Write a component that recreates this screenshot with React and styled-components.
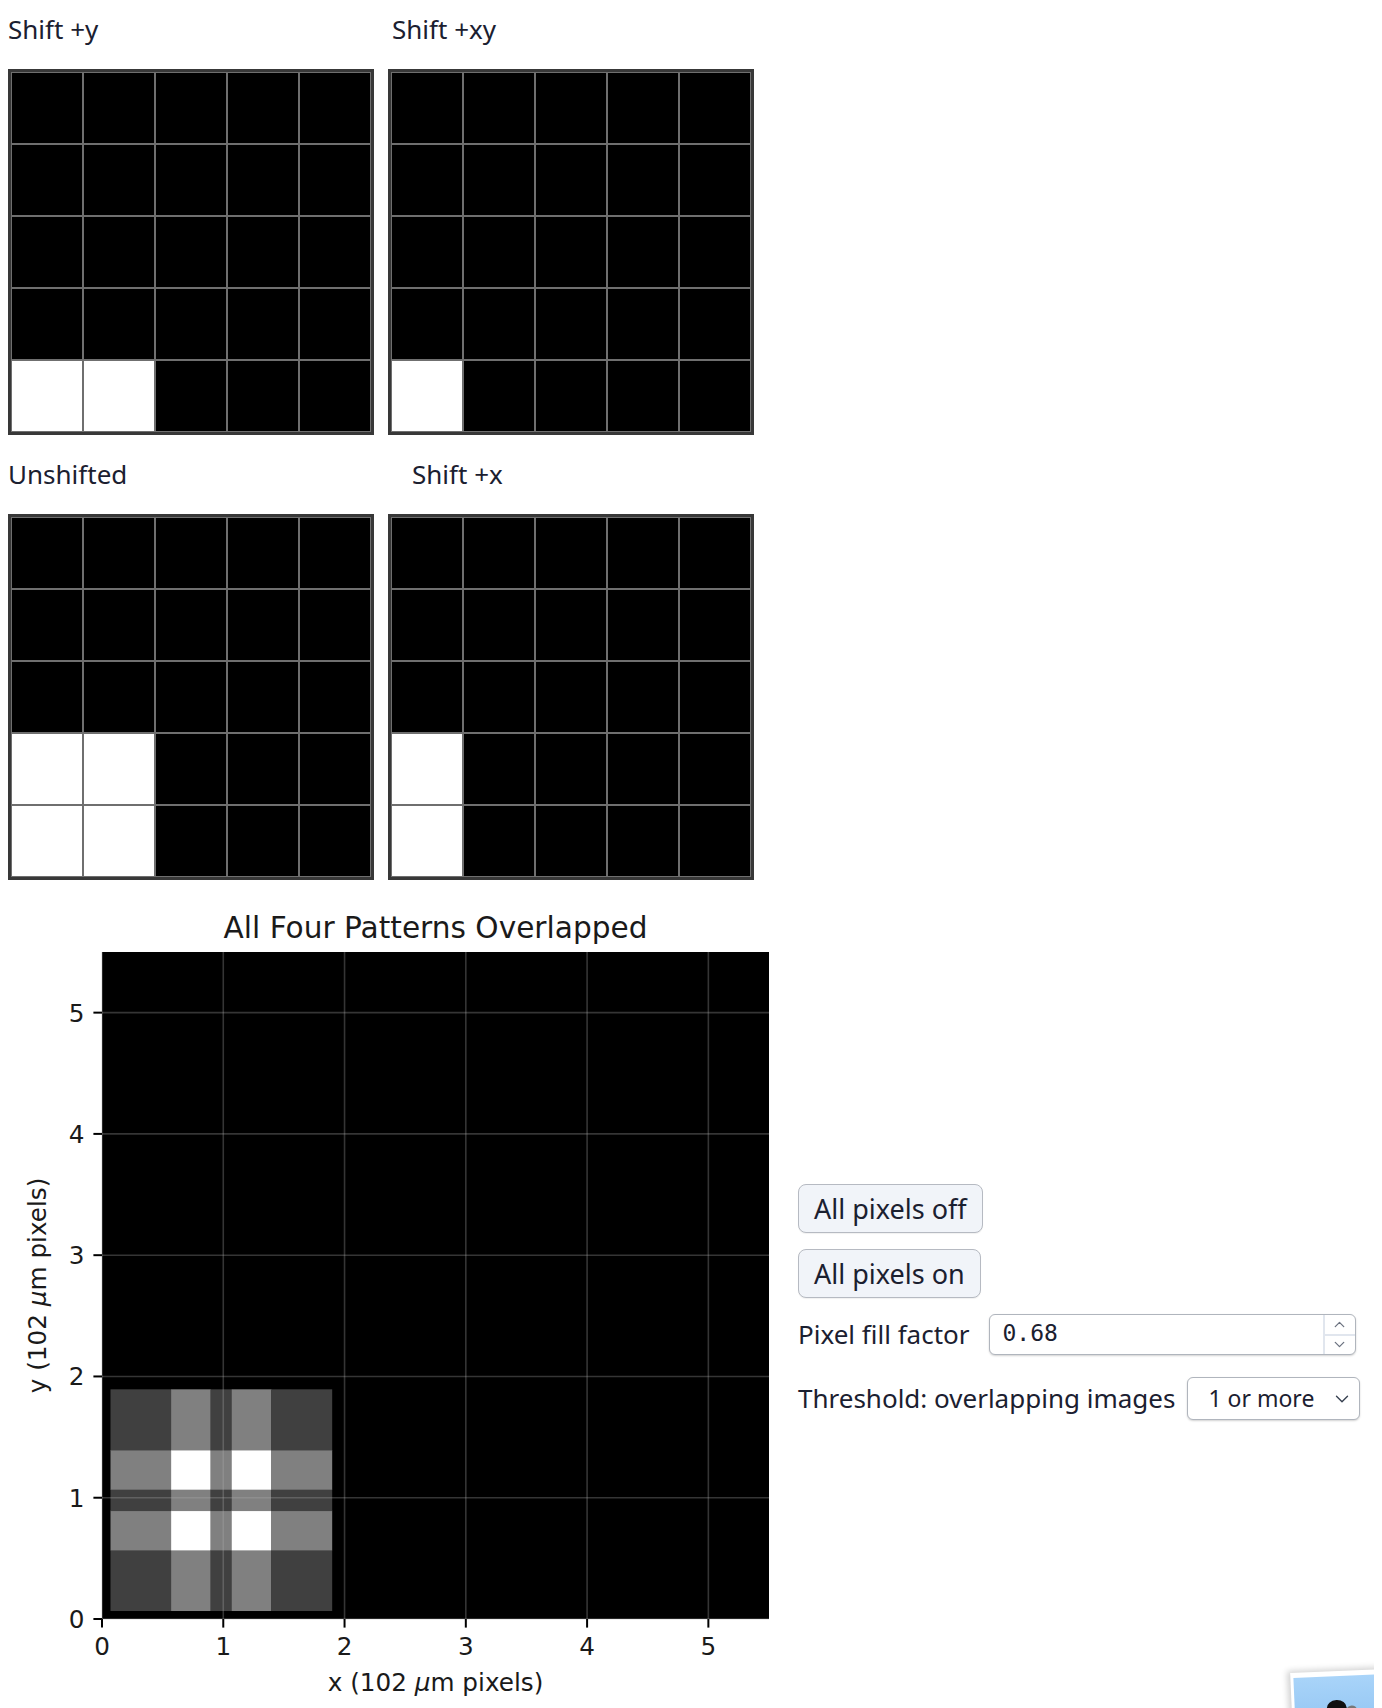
import React from "react";
import styled, { createGlobalStyle } from "styled-components";
import { ChevronDown, ChevronUp } from "lucide-react";

const GlobalStyle = createGlobalStyle`
  body {
    margin: 8px;
    background: #fff;
    color: #1b2030;
    font-family: "Noto Sans", "Open Sans", sans-serif;
  }
`;

const Page = styled.div`
  position: relative;
`;

const PanelGrid = styled.div`
  display: grid;
  grid-template-columns: repeat(2, 366px);
  column-gap: 14px;
  row-gap: 18px;
`;

const Panel = styled.div`
  display: flex;
  flex-direction: column;
`;

const PanelLabel = styled.div`
  font-size: 26px;
  line-height: 39px;
  padding-top: 2px;
  padding-left: ${(p) => p.$indent || 0}px;
  margin-bottom: 20px;
`;

const PixelBoard = styled.div`
  display: grid;
  grid-template-columns: repeat(5, 72px);
  grid-auto-rows: 72px;
  width: max-content;
  border: 3px solid #383838;
  background: #000;
`;

const Pixel = styled.div`
  box-sizing: border-box;
  border: 1px solid #6f6f6f;
  background: ${(p) => (p.$on ? "#fff" : "#000")};
`;

const Lower = styled.div`
  display: flex;
  align-items: center;
  margin-top: 8px;
`;

const Figure = styled.svg`
  display: block;
  flex: none;
  font-family: "DejaVu Sans", sans-serif;
`;

const Controls = styled.div`
  display: flex;
  flex-direction: column;
  align-items: flex-start;
  gap: 16px;
  margin-left: 8px;
  margin-bottom: 6px;
`;

const ActionButton = styled.button`
  font-family: inherit;
  font-size: 27px;
  line-height: 31px;
  color: #1b2030;
  background: #f1f4f9;
  border: 1px solid #b6bac2;
  border-radius: 8px;
  padding: 8px 15px;
  box-shadow: 0 1px 1px rgba(0, 0, 0, 0.06);
`;

const FieldRow = styled.div`
  display: flex;
  align-items: center;
  gap: ${(p) => p.$gap}px;
  margin-top: ${(p) => p.$lift || 0}px;
  font-size: 26px;
  line-height: 39px;
`;

const NumberBox = styled.div`
  display: flex;
  width: 367px;
  height: 41px;
  box-sizing: border-box;
  background: #fff;
  border: 1px solid #b0b5bd;
  border-radius: 6px;
  box-shadow: 0 1px 2px rgba(0, 0, 0, 0.18);
  overflow: hidden;
`;

const NumberInput = styled.input`
  flex: 1;
  min-width: 0;
  border: none;
  outline: none;
  background: transparent;
  font-family: "DejaVu Sans Mono", "Liberation Mono", monospace;
  font-size: 23px;
  color: #1b2030;
  padding: 0 0 4px 13px;
`;

const Spinner = styled.div`
  width: 30px;
  display: flex;
  flex-direction: column;
  border-left: 2px solid #e1e6ee;
`;

const SpinHalf = styled.div`
  flex: 1;
  display: flex;
  align-items: center;
  justify-content: center;
  color: #6b7280;
  & + & {
    border-top: 2px solid #e1e6ee;
  }
`;

const SelectWrap = styled.div`
  position: relative;
`;

const Select = styled.select`
  appearance: none;
  font-family: inherit;
  font-size: 23px;
  color: #1b2030;
  width: 173px;
  height: 43px;
  padding: 0 40px 2px 20px;
  background: #fff;
  border: 1px solid #b0b5bd;
  border-radius: 6px;
  box-shadow: 0 1px 2px rgba(0, 0, 0, 0.18);
`;

const SelectChevron = styled(ChevronDown)`
  position: absolute;
  right: 7px;
  top: 50%;
  transform: translateY(-50%);
  pointer-events: none;
  color: #374151;
`;

const Thumb = styled.svg`
  position: absolute;
  left: 1260px;
  top: 1638px;
`;

const panels = [
  { label: "Shift +y", indent: 0, on: [[4, 0], [4, 1]] },
  { label: "Shift +xy", indent: 4, on: [[4, 0]] },
  { label: "Unshifted", indent: 0, on: [[3, 0], [3, 1], [4, 0], [4, 1]] },
  { label: "Shift +x", indent: 24, on: [[3, 0], [4, 0]] },
];

const PixelPanel = ({ label, indent, on }) => (
  <Panel>
    <PanelLabel $indent={indent}>{label}</PanelLabel>
    <PixelBoard>
      {Array.from({ length: 25 }, (_, i) => {
        const r = Math.floor(i / 5);
        const c = i % 5;
        const lit = on.some(([rr, cc]) => rr === r && cc === c);
        return <Pixel key={i} $on={lit} />;
      })}
    </PixelBoard>
  </Panel>
);

// overlap plot
const FW = 782;
const FH = 834;
const PX = 94;
const PY = 64;
const PS = 667;
const UNIT = PS / 5.5;
const X = (d) => PX + d * UNIT;
const Y = (d) => PY + PS - d * UNIT;
const bounds = [0.07, 0.57, 0.894, 1.07, 1.394, 1.894];
const counts = [1, 2, 1, 2, 1];
const shade = { 1: "#404040", 2: "#808080", 4: "#ffffff" };
const ticks = [0, 1, 2, 3, 4, 5];

const OverlapPlot = () => (
  <Figure width={FW} height={FH} viewBox={`0 0 ${FW} ${FH}`}>
    <text x={PX + PS / 2} y={50} fontSize="29.6" textAnchor="middle" fill="#1a1a1a">
      All Four Patterns Overlapped
    </text>
    <rect x={PX} y={PY} width={PS} height={PS} fill="#000" />
    {counts.map((cx, i) =>
      counts.map((cy, j) => (
        <rect
          key={`${i}-${j}`}
          x={X(bounds[i])}
          y={Y(bounds[j + 1])}
          width={(bounds[i + 1] - bounds[i]) * UNIT + 0.5}
          height={(bounds[j + 1] - bounds[j]) * UNIT + 0.5}
          fill={shade[cx * cy]}
        />
      ))
    )}
    {ticks.map((k) => (
      <g key={k} stroke="#b0b0b0" strokeOpacity="0.3" strokeWidth="1.6">
        <line x1={X(k)} x2={X(k)} y1={PY} y2={PY + PS} />
        <line x1={PX} x2={PX + PS} y1={Y(k)} y2={Y(k)} />
      </g>
    ))}
    {ticks.map((k) => (
      <g key={`t${k}`}>
        <line x1={X(k)} x2={X(k)} y1={PY + PS} y2={PY + PS + 8.6} stroke="#000" strokeWidth="2" />
        <text x={X(k)} y={767} fontSize="24.7" textAnchor="middle" fill="#1a1a1a">
          {k}
        </text>
        <line x1={PX - 8.6} x2={PX} y1={Y(k)} y2={Y(k)} stroke="#000" strokeWidth="2" />
        <text x={PX - 17.5} y={Y(k) + 9} fontSize="24.7" textAnchor="end" fill="#1a1a1a">
          {k}
        </text>
      </g>
    ))}
    <text x={PX + PS / 2} y={803} fontSize="24.7" textAnchor="middle" fill="#1a1a1a">
      x (102 <tspan fontStyle="italic">μ</tspan>m pixels)
    </text>
    <text
      transform={`translate(38 ${PY + PS / 2}) rotate(-90)`}
      fontSize="24.7"
      textAnchor="middle"
      fill="#1a1a1a"
    >
      y (102 <tspan fontStyle="italic">μ</tspan>m pixels)
    </text>
  </Figure>
);

const PhotoThumb = () => (
  <Thumb width="122" height="78" viewBox="0 0 122 78">
    <defs>
      <filter id="thumbShadow" x="-20%" y="-20%" width="140%" height="140%">
        <feGaussianBlur stdDeviation="3" />
      </filter>
      <linearGradient id="sky" x1="0" y1="0" x2="0" y2="1">
        <stop offset="0" stopColor="#a9d4f9" />
        <stop offset="1" stopColor="#8fc3f2" />
      </linearGradient>
    </defs>
    <g transform="rotate(-2.5 70 45)">
      <rect x="20" y="23" width="94" height="62" fill="#000" opacity="0.18" filter="url(#thumbShadow)" />
      <rect x="23" y="25" width="90" height="62" fill="#fff" />
      <rect x="26" y="30" width="84" height="57" fill="url(#sky)" />
      <ellipse cx="68" cy="62" rx="10" ry="8" fill="#111" />
      <ellipse cx="83" cy="64" rx="5" ry="4" fill="#777" />
    </g>
  </Thumb>
);

export default function App() {
  return (
    <Page>
      <GlobalStyle />
      <PanelGrid>
        {panels.map((p) => (
          <PixelPanel key={p.label} {...p} />
        ))}
      </PanelGrid>
      <Lower>
        <OverlapPlot />
        <Controls>
          <ActionButton>All pixels off</ActionButton>
          <ActionButton>All pixels on</ActionButton>
          <FieldRow $gap={19}>
            <span>Pixel fill factor</span>
            <NumberBox>
              <NumberInput type="text" defaultValue="0.68" />
              <Spinner>
                <SpinHalf>
                  <ChevronUp size={17} strokeWidth={1.8} />
                </SpinHalf>
                <SpinHalf>
                  <ChevronDown size={17} strokeWidth={1.8} />
                </SpinHalf>
              </Spinner>
            </NumberBox>
          </FieldRow>
          <FieldRow $gap={12} $lift={6}>
            <span>Threshold: overlapping images</span>
            <SelectWrap>
              <Select defaultValue="1">
                <option value="1">1 or more</option>
                <option value="2">2 or more</option>
                <option value="3">3 or more</option>
                <option value="4">4 or more</option>
              </Select>
              <SelectChevron size={22} strokeWidth={1.5} />
            </SelectWrap>
          </FieldRow>
        </Controls>
      </Lower>
      <PhotoThumb />
    </Page>
  );
}
